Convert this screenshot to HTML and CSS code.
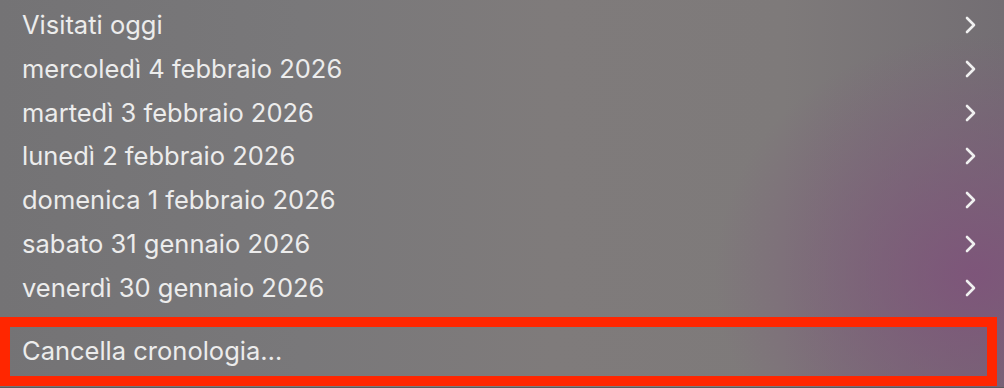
FILE: index.html
```html
<!DOCTYPE html>
<html lang="it">
<head>
<meta charset="utf-8">
<title>Cronologia</title>
<link rel="stylesheet" href="styles.css">
</head>
<body>
<div class="menu">
  <ul class="list">
    <li class="row"><span class="label">Visitati oggi</span><svg class="chev" viewBox="0 0 11 18" width="11" height="18"><path d="M2 2 L9 9 L2 16" /></svg></li>
    <li class="row"><span class="label">mercoledì 4 febbraio 2026</span><svg class="chev" viewBox="0 0 11 18" width="11" height="18"><path d="M2 2 L9 9 L2 16" /></svg></li>
    <li class="row"><span class="label">martedì 3 febbraio 2026</span><svg class="chev" viewBox="0 0 11 18" width="11" height="18"><path d="M2 2 L9 9 L2 16" /></svg></li>
    <li class="row"><span class="label">lunedì 2 febbraio 2026</span><svg class="chev" viewBox="0 0 11 18" width="11" height="18"><path d="M2 2 L9 9 L2 16" /></svg></li>
    <li class="row"><span class="label">domenica 1 febbraio 2026</span><svg class="chev" viewBox="0 0 11 18" width="11" height="18"><path d="M2 2 L9 9 L2 16" /></svg></li>
    <li class="row"><span class="label">sabato 31 gennaio 2026</span><svg class="chev" viewBox="0 0 11 18" width="11" height="18"><path d="M2 2 L9 9 L2 16" /></svg></li>
    <li class="row"><span class="label">venerdì 30 gennaio 2026</span><svg class="chev" viewBox="0 0 11 18" width="11" height="18"><path d="M2 2 L9 9 L2 16" /></svg></li>
  </ul>
  <div class="clear">
    <span class="label">Cancella cronologia…</span>
  </div>
  <div class="edge"></div>
</div>
</body>
</html>
```
FILE: styles.css
```css
html, body {
  margin: 0;
  padding: 0;
  width: 1004px;
  height: 388px;
  overflow: hidden;
}
body {
  font-family: Inter, "Noto Sans", sans-serif;
  color: #ececec;
  background:
    radial-gradient(ellipse 260px 240px at 975px 275px, rgba(126, 84, 122, 0.95), rgba(126, 84, 122, 0) 100%),
    linear-gradient(90deg, #747375 0%, #79787a 30%, #7f7b7b 55%, #7e7a7a 78%, #736e73 100%);
}
.menu {
  display: flex;
  flex-direction: column;
  height: 388px;
}
.list {
  list-style: none;
  margin: 0;
  padding: 3px 0 0 0;
}
.row {
  display: flex;
  align-items: center;
  justify-content: space-between;
  height: 43.83px;
  padding: 0 28px 0 22px;
}
.label {
  font-size: 25.5px;
  line-height: 30px;
  letter-spacing: 0;
}
.chev {
  display: block;
  fill: none;
  stroke: #f0f0f0;
  stroke-width: 2.6;
  stroke-linecap: round;
  stroke-linejoin: round;
}
.clear {
  margin-top: 7px;
  margin-right: 7px;
  height: 49px;
  border: 10px solid #ff2600;
  display: flex;
  align-items: center;
  padding-left: 12px;
}
.edge {
  margin-top: 1px;
  height: 1px;
  background: #5a5a5c;
}
```
